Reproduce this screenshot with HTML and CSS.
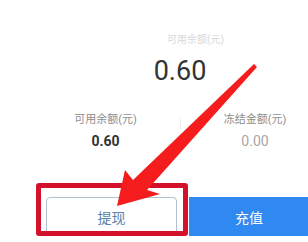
FILE: index.html
```html
<!DOCTYPE html>
<html lang="zh-CN">
<head>
<meta charset="utf-8">
<title>余额</title>
<link rel="stylesheet" href="styles.css">
</head>
<body>
<div class="viewport">
  <div class="page">
    <section class="summary">
      <div class="summary-label">可用余额(元)</div>
      <div class="summary-value">0.60</div>
    </section>
    <section class="stats">
      <div class="stat">
        <div class="stat-label">可用余额(元)</div>
        <div class="stat-value">0.60</div>
      </div>
      <div class="divider"></div>
      <div class="stat">
        <div class="stat-label">冻结金额(元)</div>
        <div class="stat-value muted">0.00</div>
      </div>
    </section>
    <section class="actions">
      <button class="btn btn-outline">提现</button>
      <button class="btn btn-primary">充值</button>
    </section>
  </div>
</div>
<div class="annot-box"></div>
<svg class="annot-arrow" width="308" height="242" viewBox="0 0 308 242">
  <polygon points="254,64 257,67 147,190 160,194 117,206 125,170 133,180" fill="#f41c1c"/>
</svg>
</body>
</html>
```

FILE: styles.css
```css
html, body {
  margin: 0;
  padding: 0;
  background: #ffffff;
}

body {
  width: 308px;
  height: 242px;
  position: relative;
  overflow: hidden;
  font-family: "Roboto", "Noto Sans CJK SC", sans-serif;
}

.viewport {
  width: 308px;
  height: 242px;
  overflow: hidden;
}

.page {
  width: 360px;
}

.summary {
  padding-top: 34px;
  text-align: center;
}

.summary-label {
  font-size: 10px;
  line-height: 12px;
  color: #d8d8d8;
  padding-left: 31px;
}

.summary-value {
  margin-top: 9px;
  font-size: 27px;
  line-height: 32px;
  color: #333333;
}

.stats {
  display: flex;
  margin-top: 26px;
  padding-left: 31px;
}

.stat {
  width: 149px;
  display: flex;
  flex-direction: column;
  align-items: center;
}

.stat:last-child {
  width: 148px;
}

.divider {
  width: 1px;
  height: 13px;
  margin-top: 4px;
  background: #ededed;
}

.stat-label {
  font-size: 11px;
  line-height: 14px;
  color: #8e8e8e;
}

.stat-value {
  margin-top: 5px;
  font-size: 14px;
  line-height: 18px;
  font-weight: 700;
  color: #333333;
}

.stat-value.muted {
  font-weight: 400;
  color: #a6a6a6;
}

.actions {
  display: flex;
  gap: 12px;
  margin-top: 47px;
  padding-left: 46px;
}

.btn {
  height: 39px;
  font-family: "Roboto", "Noto Sans CJK SC", sans-serif;
  font-size: 14px;
  border-radius: 4px;
  padding: 0;
}

.btn-outline {
  width: 131px;
  background: #ffffff;
  border: 1px solid #b3c1cf;
  color: #5a7fa8;
}

.btn-primary {
  width: 120px;
  background: #3089f1;
  border: none;
  color: #ffffff;
  border-radius: 0;
}

.annot-box {
  position: absolute;
  left: 36px;
  top: 183px;
  width: 152px;
  height: 53px;
  box-sizing: border-box;
  border: 5px solid #d3112b;
  border-radius: 3px;
}

.annot-arrow {
  position: absolute;
  left: 0;
  top: 0;
}
```
